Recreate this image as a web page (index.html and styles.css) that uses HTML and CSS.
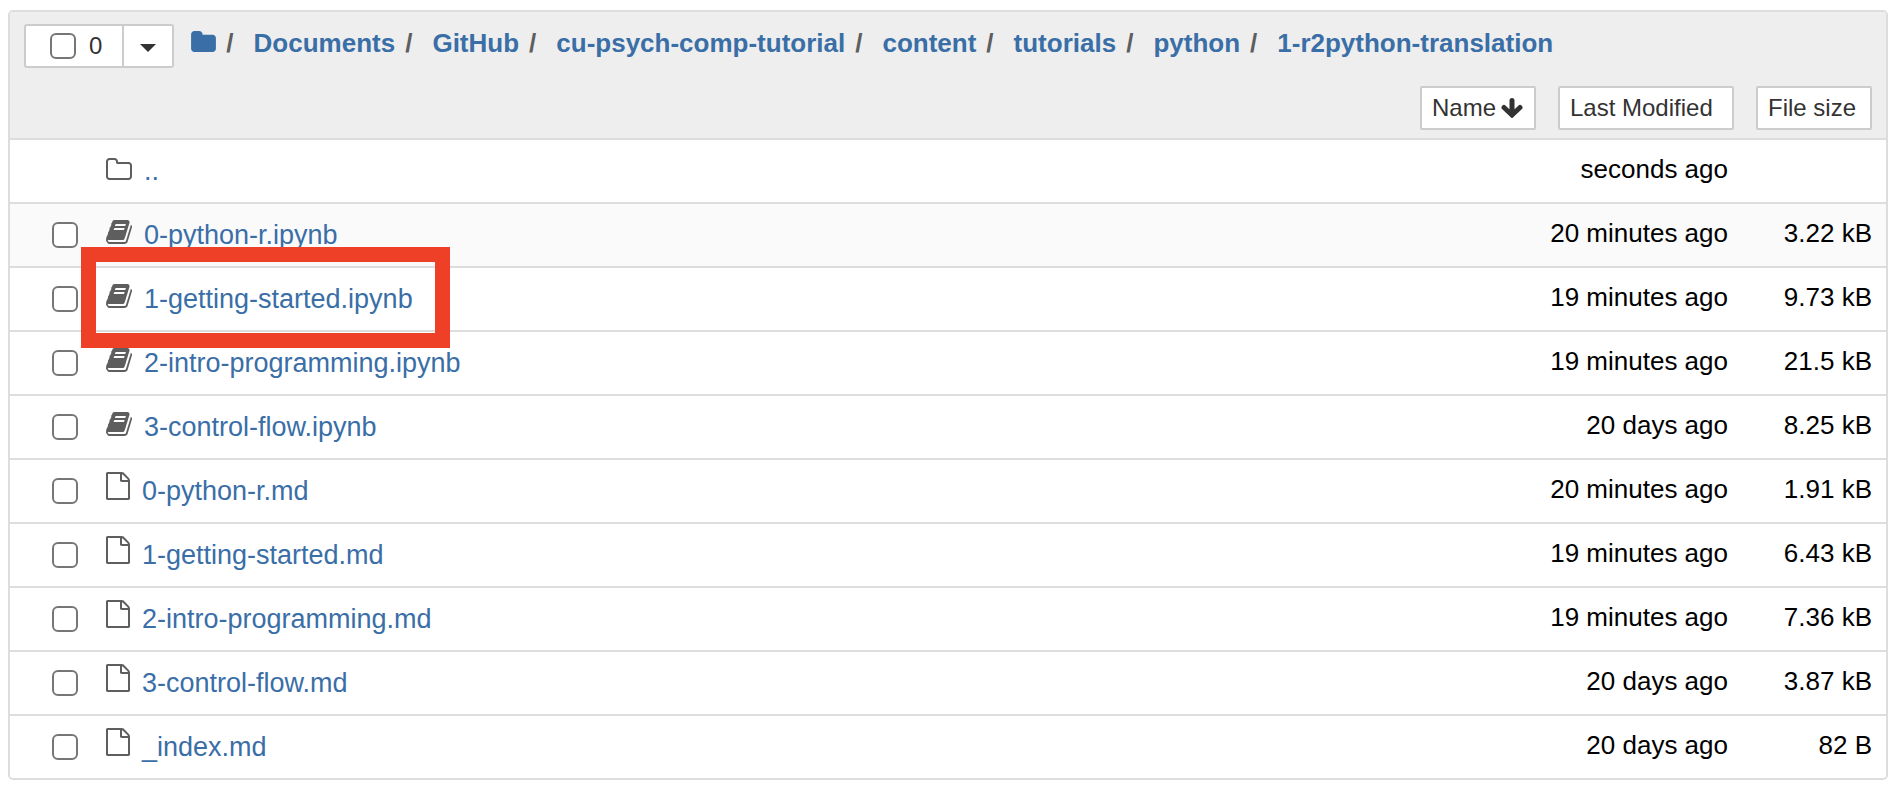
FILE: index.html
```
<!DOCTYPE html>
<html lang="en">
<head>
<meta charset="utf-8">
<title>1-r2python-translation</title>
<link rel="stylesheet" href="styles.css">
</head>
<body>
<svg class="sprite" aria-hidden="true">
  <symbol id="folder" viewBox="64 128 1664 1408"><path d="M1728 608v704q0 92-66 158t-158 66h-1216q-92 0-158-66t-66-158v-960q0-92 66-158t158-66h320q92 0 158 66t66 158v32h672q92 0 158 66t66 158z"/></symbol>
  <symbol id="folder-open" viewBox="64 128 1664 1408"><path d="M1600 1312v-704q0-40-28-68t-68-28h-704q-40 0-68-28t-28-68v-64q0-40-28-68t-68-28h-320q-40 0-68 28t-28 68v960q0 40 28 68t68 28h1216q40 0 68-28t28-68zm128-704v704q0 92-66 158t-158 66h-1216q-92 0-158-66t-66-158v-960q0-92 66-158t158-66h320q92 0 158 66t66 158v32h672q92 0 158 66t66 158z"/></symbol>
  <symbol id="book" viewBox="64 128 1664 1536"><path d="M1703 478q40 57 18 129l-275 906q-19 64-76.500 107.500t-122.500 43.500h-923q-77 0-148.500-53.500t-99.500-131.500q-24-67-2-127 0-4 3-27t4-37q1-8-3-21.500t-3-19.500q2-11 8-21t16.500-23.500 16.500-23.500q23-38 45-91.500t30-91.500q3-10 .5-30t-.5-28q3-11 17-28t17-23q21-36 42-92t25-90q1-9-2.500-32t.5-28q4-13 22-30.500t22-22.500q19-26 42.500-84.500t27.500-96.500q1-8-3-25.500t-2-26.500q2-8 9-18t18-23 17-21q8-12 16.500-30.500t15-35 16-36 19.500-32 26.500-23.500 36-11.500 47.500 5.500l-1 3q38-9 51-9h761q74 0 114 56t18 130l-274 906q-36 119-71.500 153.500t-128.500 34.500h-869q-27 0-38 15-11 16-1 43 24 70 144 70h923q29 0 56-15.500t35-41.500l300-987q7-22 5-57 38 15 59 43zm-1064 2q-4 13 2 22.500t20 9.500h608q13 0 25.500-9.500t16.500-22.500l21-64q4-13-2-22.500t-20-9.500h-608q-13 0-25.500 9.500t-16.500 22.500zm-83 256q-4 13 2 22.500t20 9.500h608q13 0 25.500-9.500t16.500-22.500l21-64q4-13-2-22.500t-20-9.500h-608q-13 0-25.500 9.500t-16.500 22.500z"/></symbol>
  <symbol id="file" viewBox="128 0 1536 1792"><path d="M1596 380q28 28 48 76t20 88v1152q0 40-28 68t-68 28h-1344q-40 0-68-28t-28-68v-1600q0-40 28-68t68-28h896q40 0 88 20t76 48zm-444-244v376h376q-10-29-22-41l-313-313q-12-12-41-22zm384 1528v-1024h-416q-40 0-68-28t-28-68v-416h-768v1536h1280z"/></symbol>
</svg>
<main class="panel">
  <header class="head">
    <div class="path-row">
      <div class="select-group">
        <label class="select-all"><input type="checkbox" class="check" aria-label="Select all">0</label>
        <button class="select-menu" aria-label="Select menu"><svg class="caret" viewBox="0 0 16 8"><path d="M0 0h16L8 8z"/></svg></button>
      </div>
      <nav class="crumbs" aria-label="Path">
        <a href="#" aria-label="Home"><svg class="icon home"><use href="#folder"/></svg></a><span class="sep">/</span>
        <a href="#">Documents</a><span class="sep">/</span>
        <a href="#">GitHub</a><span class="sep">/</span>
        <a href="#">cu-psych-comp-tutorial</a><span class="sep">/</span>
        <a href="#">content</a><span class="sep">/</span>
        <a href="#">tutorials</a><span class="sep">/</span>
        <a href="#">python</a><span class="sep">/</span>
        <a href="#">1-r2python-translation</a>
      </nav>
    </div>
    <div class="sort-row">
      <button class="sort name-sort">Name <svg class="arrow" viewBox="0 0 22 20"><path d="M11 2.500V16M3 9.500L11 17l8-7.500"/></svg></button>
      <button class="sort modified-sort">Last Modified</button>
      <button class="sort size-sort">File size</button>
    </div>
  </header>
  <table class="files">
    <tbody>
      <tr><td class="pick"></td><td class="name"><a href="#"><svg class="icon folder"><use href="#folder-open"/></svg>..</a></td><td class="modified">seconds ago</td><td class="size"></td></tr>
      <tr class="hovered"><td class="pick"><input type="checkbox" class="check" aria-label="0-python-r.ipynb"></td><td class="name"><a href="#"><svg class="icon book"><use href="#book"/></svg>0-python-r.ipynb</a></td><td class="modified">20 minutes ago</td><td class="size">3.22 kB</td></tr>
      <tr><td class="pick"><input type="checkbox" class="check" aria-label="1-getting-started.ipynb"></td><td class="name"><a href="#" class="marked"><svg class="icon book"><use href="#book"/></svg>1-getting-started.ipynb</a></td><td class="modified">19 minutes ago</td><td class="size">9.73 kB</td></tr>
      <tr><td class="pick"><input type="checkbox" class="check" aria-label="2-intro-programming.ipynb"></td><td class="name"><a href="#"><svg class="icon book"><use href="#book"/></svg>2-intro-programming.ipynb</a></td><td class="modified">19 minutes ago</td><td class="size">21.5 kB</td></tr>
      <tr><td class="pick"><input type="checkbox" class="check" aria-label="3-control-flow.ipynb"></td><td class="name"><a href="#"><svg class="icon book"><use href="#book"/></svg>3-control-flow.ipynb</a></td><td class="modified">20 days ago</td><td class="size">8.25 kB</td></tr>
      <tr><td class="pick"><input type="checkbox" class="check" aria-label="0-python-r.md"></td><td class="name"><a href="#"><svg class="icon file"><use href="#file"/></svg>0-python-r.md</a></td><td class="modified">20 minutes ago</td><td class="size">1.91 kB</td></tr>
      <tr><td class="pick"><input type="checkbox" class="check" aria-label="1-getting-started.md"></td><td class="name"><a href="#"><svg class="icon file"><use href="#file"/></svg>1-getting-started.md</a></td><td class="modified">19 minutes ago</td><td class="size">6.43 kB</td></tr>
      <tr><td class="pick"><input type="checkbox" class="check" aria-label="2-intro-programming.md"></td><td class="name"><a href="#"><svg class="icon file"><use href="#file"/></svg>2-intro-programming.md</a></td><td class="modified">19 minutes ago</td><td class="size">7.36 kB</td></tr>
      <tr><td class="pick"><input type="checkbox" class="check" aria-label="3-control-flow.md"></td><td class="name"><a href="#"><svg class="icon file"><use href="#file"/></svg>3-control-flow.md</a></td><td class="modified">20 days ago</td><td class="size">3.87 kB</td></tr>
      <tr><td class="pick"><input type="checkbox" class="check" aria-label="_index.md"></td><td class="name"><a href="#"><svg class="icon file"><use href="#file"/></svg>_index.md</a></td><td class="modified">20 days ago</td><td class="size">82 B</td></tr>
    </tbody>
  </table>
</main>
</body>
</html>
```
FILE: styles.css
```
* { box-sizing: border-box; }
body {
  margin: 0;
  padding: 10px 8px 8px;
  background: #fff;
  color: #000;
  font: 26px/30px "Liberation Sans", Arial, sans-serif;
}
a { color: #3a6ea7; text-decoration: none; }
button { font: inherit; color: inherit; cursor: pointer; }
.sprite { display: none; }
.icon { flex: none; fill: #5e5e5e; }

.panel { border: 2px solid #ddd; border-radius: 5px; overflow: hidden; }
.head { background: #eee; padding: 12px 14px 8px; }

.path-row { display: flex; align-items: flex-start; gap: 17px; }
.select-group {
  display: flex;
  height: 44px;
  border: 2px solid #ccc;
  border-radius: 3px;
  background: #fff;
  color: #333;
  font-size: 24px;
}
.select-all { display: flex; align-items: center; gap: 13px; padding: 0 20px 0 24px; }
.select-menu {
  display: flex;
  align-items: center;
  justify-content: center;
  width: 50px;
  padding: 4px 0 0;
  border: 0;
  border-left: 2px solid #ccc;
  background: #fff;
}
.caret { width: 16px; height: 8px; fill: #333; }
.check {
  appearance: none;
  display: block;
  width: 26px;
  height: 26px;
  margin: 0;
  border: 2px solid #767676;
  border-radius: 6px;
  background: #fff;
}

.crumbs { display: flex; flex-wrap: wrap; align-items: baseline; padding-top: 4px; font-weight: bold; }
.home { width: 25px; height: 21px; fill: #3a6ea7; }
.sep { margin: 0 20px 0 10px; color: #5e5e5e; }

.sort-row { display: flex; justify-content: flex-end; gap: 22px; padding-top: 18px; }
.sort {
  height: 44px;
  padding: 0 10px;
  border: 2px solid #ccc;
  border-radius: 2px;
  background: #fff;
  color: #333;
  font-size: 24px;
  text-align: left;
  white-space: nowrap;
}
.name-sort { display: flex; align-items: center; gap: 5px; width: 116px; }
.modified-sort { width: 176px; }
.size-sort { width: 116px; }
.arrow { flex: none; width: 22px; height: 20px; fill: none; stroke: #333; stroke-width: 5; stroke-linecap: round; }

.files { width: 100%; border-collapse: separate; border-spacing: 0; table-layout: fixed; }
.files td { height: 64px; padding: 0; border-top: 2px solid #ddd; }
.files .pick { width: 96px; padding-left: 42px; }
.files .name { padding-bottom: 16px; font-size: 27px; vertical-align: bottom; }
.name a { position: relative; display: flex; align-items: flex-end; gap: 12px; width: max-content; }
.name .icon { margin-bottom: 6px; }
.files .modified { width: 280px; padding-bottom: 4px; text-align: right; }
.files .size { width: 158px; padding: 0 14px 4px 0; text-align: right; }
.hovered { background: #fafafa; }

.book { width: 26px; height: 24px; }
.folder { width: 26px; height: 22px; }
.file { width: 24px; height: 28px; }

.marked::after {
  content: "";
  position: absolute;
  inset: -37px -37px -34px -25px;
  border: 15px solid #ed4027;
  z-index: 1;
  pointer-events: none;
}
```
